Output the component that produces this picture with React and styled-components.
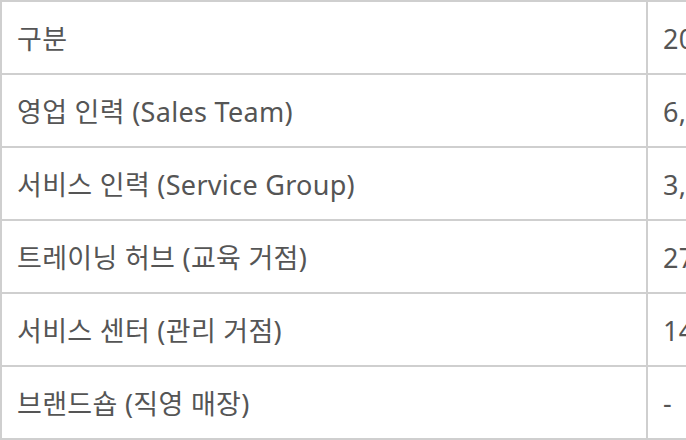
import React from "react";
import styled, { createGlobalStyle } from "styled-components";

const Global = createGlobalStyle`
  html, body { margin: 0; padding: 0; background: #fff; overflow: hidden; }
  body { width: 686px; height: 440px; }
`;

const Table = styled.table`
  border-collapse: collapse;
  table-layout: fixed;
  width: 1000px;
  font-family: "Noto Sans", "Noto Sans CJK KR", sans-serif;
  font-size: 27px;
  letter-spacing: 0.3px;
  color: #555;
`;

const Row = styled.tr`
  height: 73px;
`;

const Cell = styled.td`
  border: 2px solid #cfcfcf;
  padding: 0 0 0 15px;
  vertical-align: middle;
  white-space: nowrap;
  overflow: hidden;
  width: ${(p) => (p.$first ? "629px" : "auto")};
`;

const rows = [
  ["구분", "2024년"],
  ["영업 인력 (Sales Team)", "6,000명"],
  ["서비스 인력 (Service Group)", "3,000명"],
  ["트레이닝 허브 (교육 거점)", "27개"],
  ["서비스 센터 (관리 거점)", "14개"],
  ["브랜드숍 (직영 매장)", "-"],
];

export default function App() {
  return (
    <>
      <Global />
      <Table>
        <tbody>
          {rows.map(([a, b]) => (
            <Row key={a}>
              <Cell $first>{a}</Cell>
              <Cell>{b}</Cell>
            </Row>
          ))}
        </tbody>
      </Table>
    </>
  );
}
